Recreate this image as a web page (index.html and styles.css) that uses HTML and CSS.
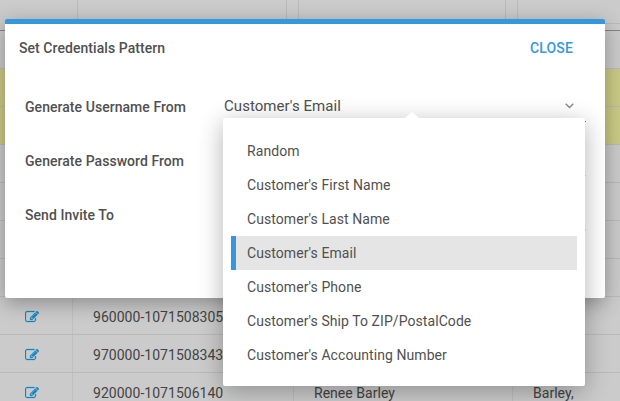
FILE: index.html
```html
<!DOCTYPE html>
<html lang="en">
<head>
<meta charset="utf-8">
<title>Set Credentials Pattern</title>
<link rel="stylesheet" href="styles.css">
</head>
<body>
<svg width="0" height="0" class="defs"><symbol id="edit" viewBox="0 0 1792 1792"><path d="M888 1184l116-116-152-152-116 116v56h96v96h56zm440-720q-16-16-33 1l-350 350q-17 17-1 33t33-1l350-350q17-17 1-33zm80 594v190q0 119-84.500 203.500t-203.500 84.500h-832q-119 0-203.500-84.500t-84.500-203.500v-832q0-119 84.500-203.500t203.500-84.500h832q63 0 117 25 15 7 18 23 3 17-9 29l-49 49q-14 14-32 8-23-6-45-6h-832q-66 0-113 47t-47 113v832q0 66 47 113t113 47h832q66 0 113-47t47-113v-126q0-13 9-22l64-64q15-15 35-7t20 29zm-96-738l288 288-672 672h-288v-288zm444 132l-92 92-288-288 92-92q28-28 68-28t68 28l152 152q28 28 28 68t-28 68z"/></symbol></svg>
<div class="table">
  <div class="head"><span class="h1"></span><span class="h2"></span><span class="h3"></span><span class="h4"></span></div>
  <div class="row"></div>
  <div class="row marked"></div>
  <div class="row marked"></div>
  <div class="row"></div>
  <div class="row"></div>
  <div class="row"></div>
  <div class="row"></div>
  <div class="row"><span class="edit"><svg><use href="#edit"/></svg></span><span>960000-1071508305</span><span></span><span></span></div>
  <div class="row"><span class="edit"><svg><use href="#edit"/></svg></span><span>970000-1071508343</span><span></span><span></span></div>
  <div class="row"><span class="edit"><svg><use href="#edit"/></svg></span><span>920000-1071506140</span><span>Renee Barley</span><span>Barley,</span></div>
</div>
<div class="modal">
  <header><h1>Set Credentials Pattern</h1><button>CLOSE</button></header>
  <div class="form">
    <div class="field">
      <label>Generate Username From</label>
      <div class="select active">
        <span>Customer's Email</span>
        <svg class="chevron" viewBox="0 0 9 6"><path d="M.7.8l3.800 3.800L8.300.8"/></svg>
        <ul class="menu">
          <li>Random</li>
          <li>Customer's First Name</li>
          <li>Customer's Last Name</li>
          <li class="selected">Customer's Email</li>
          <li>Customer's Phone</li>
          <li>Customer's Ship To ZIP/PostalCode</li>
          <li>Customer's Accounting Number</li>
        </ul>
      </div>
    </div>
    <div class="field"><label>Generate Password From</label><div class="select"></div></div>
    <div class="field"><label>Send Invite To</label><div class="select"></div></div>
  </div>
</div>
</body>
</html>
```
FILE: styles.css
```css
* { box-sizing: border-box; }
body {
  margin: 0;
  height: 401px;
  overflow: hidden;
  background: #cbcbcb;
  color: #505050;
  font: 14px/20px Roboto, sans-serif;
}
.defs { position: absolute; }

.table { height: 401px; overflow: hidden; color: #444; }
.head {
  display: grid;
  grid-template-columns: 78px 209px 12px 207px 12px 1fr;
  height: 31px;
  border-bottom: 1px solid #858585;
}
.head span { border-right: 1px solid #bababa; }
.head::after {
  content: "";
  height: 23px;
  border-left: 1px solid #bababa;
  border-bottom: 1px solid #bababa;
  margin-left: 11px;
  grid-column: 5 / 7;
}
.row {
  display: grid;
  grid-template-columns: 73px 221px 219px 1fr;
  height: 38px;
  border-bottom: 1px solid #bababe;
}
.row span { padding: 10px 0 0 20px; border-right: 1px solid #bdbfc0; letter-spacing: .03px; }
.row span:last-child { border-right: 0; }
.row .edit { padding: 13px 0 0 25px; }
.edit svg { display: block; width: 14px; height: 14px; fill: #1085c8; stroke: #1085c8; stroke-width: 30; }
.marked { background: #cbcb86; }

.modal {
  position: absolute;
  left: 5px;
  top: 19px;
  width: 600px;
  height: 279px;
  border-top: 5px solid #3598dc;
  border-radius: 2px;
  background: #fff;
  box-shadow: 0 5px 20px rgba(0, 0, 0, .32);
}
header {
  display: flex;
  justify-content: space-between;
  padding: 14px 32px 0 14px;
  height: 56px;
}
h1 { margin: 0; font-size: 14px; font-weight: 500; line-height: 20px; letter-spacing: .06px; }
button {
  height: 20px;
  padding: 0;
  border: 0;
  background: none;
  color: #3598dc;
  font: 500 14px/20px Roboto, sans-serif;
  letter-spacing: .15px;
}
.form { padding: 0 18px 0 20px; }
.field { display: grid; grid-template-columns: 198px 1fr; height: 54px; }
label { padding-top: 17px; font-weight: 500; letter-spacing: .05px; }
.select {
  position: relative;
  display: flex;
  justify-content: space-between;
  height: 42px;
  padding: 16px 12px 0 1px;
  margin-right: 1px;
  border-bottom: 1px solid #dedede;
  font-size: 15px;
  letter-spacing: .05px;
}
.active { border-color: #3598dc; }
.chevron { width: 9px; height: 6px; margin-top: 7px; fill: none; stroke: #888; stroke-width: 1.4; }
.menu {
  position: absolute;
  z-index: 1;
  left: 0;
  top: 38px;
  width: 362px;
  height: 268px;
  margin: 0;
  padding: 16px 8px;
  list-style: none;
  border-radius: 2px;
  background: #fff;
  box-shadow: 0 5px 25px rgba(0, 0, 0, .3);
  font-size: 14px;
  letter-spacing: .07px;
}
.menu::before {
  content: "";
  position: absolute;
  left: 182px;
  top: -6px;
  border: solid transparent;
  border-width: 0 7px 6px;
  border-bottom-color: #fff;
}
.menu li { height: 34px; padding: 7px 16px; }
.menu .selected { padding-left: 11px; border-left: 5px solid #3598dc; background: #e5e5e5; }
```
